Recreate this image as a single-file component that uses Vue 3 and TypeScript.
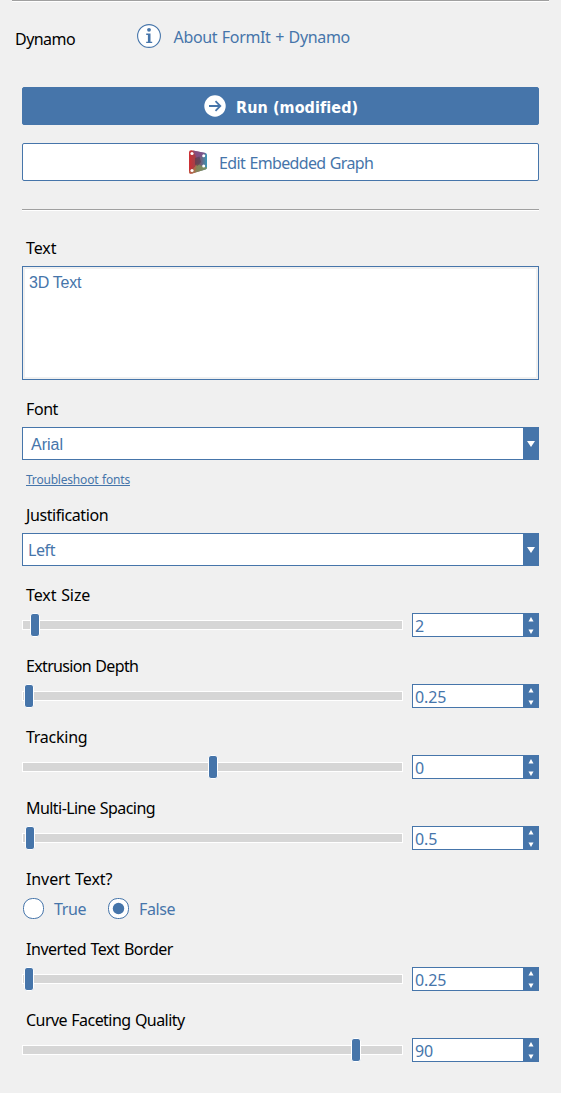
<script setup lang="ts">
import { ref } from 'vue'

interface SliderField {
  label: string
  value: string
  handle: number
  tracking: number
}

const sizing = ref<SliderField[]>([
  { label: 'Text Size', value: '2', handle: 8, tracking: -0.1 },
  { label: 'Extrusion Depth', value: '0.25', handle: 2, tracking: -0.66 },
  { label: 'Tracking', value: '0', handle: 186, tracking: -0.26 },
  { label: 'Multi-Line Spacing', value: '0.5', handle: 3, tracking: -0.56 },
])

const finishing = ref<SliderField[]>([
  { label: 'Inverted Text Border', value: '0.25', handle: 2, tracking: -0.46 },
  { label: 'Curve Faceting Quality', value: '90', handle: 329, tracking: -0.56 },
])

const invert = ref('False')
const content = ref('3D Text')
</script>

<template>
  <main class="panel">
    <hr class="rule top-rule" />
    <header class="header">
      <span class="title">Dynamo</span>
      <svg class="info" width="26" height="26" viewBox="0 0 26 26">
        <circle cx="13" cy="13" r="11.4" fill="#fff" stroke="#4675aa" stroke-width="1.1" />
        <circle cx="13" cy="6.8" r="1.9" fill="#4675aa" />
        <path d="M10.200 10.500h4.300v8.200h1.700v1.400h-6v-1.400h1.700v-6.800h-1.700z" fill="#4675aa" />
      </svg>
      <a class="about">About FormIt + Dynamo</a>
    </header>

    <div class="body">
      <button class="btn run">
        <svg width="22" height="22" viewBox="0 0 22 22">
          <circle cx="11" cy="11" r="10.7" fill="#fff" />
          <path d="M5 11h11M11.5 6.2l4.8 4.8-4.8 4.8" fill="none" stroke="#4675aa" stroke-width="1.8" />
        </svg>
        <span>Run (modified)</span>
      </button>
      <button class="btn edit">
        <svg width="20" height="26" viewBox="0 0 20 26">
          <defs>
            <linearGradient id="base" x1="0" y1="0" x2="1" y2="0">
              <stop offset="0" stop-color="#cf2f33" />
              <stop offset=".35" stop-color="#a3414a" />
              <stop offset=".7" stop-color="#6b6682" />
              <stop offset="1" stop-color="#3a97b8" />
            </linearGradient>
          </defs>
          <path d="M1 3.500Q1 1 3.500 1.200L17.500 4Q19 4.300 19 6v12.500q0 1.500-1.500 2L4 24.600Q1 25.300 1 23z" fill="url(#base)" />
          <path d="M5 1.500l12.500 2.600-2 2.600L9 10z" fill="#80508a" opacity=".8" />
          <path d="M4 21.500L9 15l6.700 2.500 3.300 1q0 1.500-1.500 2L4 24.600z" fill="#80905a" opacity=".85" />
          <path d="M1 22l3-.5L9 15l-2 8.700-3 .9q-3 .7-3-1.600z" fill="#b46848" opacity=".75" />
          <path d="M7 9l4.500-1.500L13 13l-3.500 4L7 15.500z" fill="#4c3e50" opacity=".6" />
          <g fill="#fff"><circle cx="4" cy="4.500" r="1.600" /><circle cx="15.700" cy="6.700" r="1.500" /><circle cx="4" cy="21.500" r="1.600" /><circle cx="15.700" cy="17" r="1.500" /></g>
        </svg>
        <span>Edit Embedded Graph</span>
      </button>
      <hr class="rule" />

      <section class="field first">
        <label class="label l-text">Text</label>
        <textarea v-model="content" class="area" spellcheck="false"></textarea>
      </section>

      <section class="field">
        <label class="label l-just">Font</label>
        <div class="select arial"><span>Arial</span><i class="drop"><svg width="8" height="6"><path d="M0 0h8L4 6z" fill="#fff" /></svg></i></div>
        <a class="trouble">Troubleshoot fonts</a>
      </section>

      <section class="field after-link">
        <label class="label l-just">Justification</label>
        <div class="select"><span>Left</span><i class="drop"><svg width="8" height="6"><path d="M0 0h8L4 6z" fill="#fff" /></svg></i></div>
      </section>

      <section v-for="f in sizing" :key="f.label" class="field">
        <label class="label" :style="{ letterSpacing: f.tracking + 'px' }">{{ f.label }}</label>
        <div class="row">
          <div class="slider"><div class="track"></div><div class="handle" :style="{ left: f.handle + 'px' }"></div></div>
          <div class="spin">
            <span>{{ f.value }}</span>
            <i class="steps">
              <svg width="6" height="5"><path d="M.5 4.500h5L3 0z" fill="#fff" /></svg>
              <svg width="6" height="5"><path d="M.5.5h5L3 5z" fill="#fff" /></svg>
            </i>
          </div>
        </div>
      </section>

      <section class="field">
        <label class="label l-text">Invert Text?</label>
        <div class="radios">
          <div v-for="o in ['True', 'False']" :key="o" class="radio" @click="invert = o">
            <svg width="23" height="23" viewBox="0 0 23 23">
              <rect x="1.500" y="1.500" width="20" height="20" rx="9" fill="#fff" stroke="#4675aa" />
              <circle v-if="invert === o" cx="11.500" cy="11.500" r="5.700" fill="#4675aa" />
            </svg>
            <span>{{ o }}</span>
          </div>
        </div>
      </section>

      <section v-for="f in finishing" :key="f.label" class="field">
        <label class="label" :style="{ letterSpacing: f.tracking + 'px' }">{{ f.label }}</label>
        <div class="row">
          <div class="slider"><div class="track"></div><div class="handle" :style="{ left: f.handle + 'px' }"></div></div>
          <div class="spin">
            <span>{{ f.value }}</span>
            <i class="steps">
              <svg width="6" height="5"><path d="M.5 4.500h5L3 0z" fill="#fff" /></svg>
              <svg width="6" height="5"><path d="M.5.5h5L3 5z" fill="#fff" /></svg>
            </i>
          </div>
        </div>
      </section>
    </div>
  </main>
</template>

<style>
body { background: #f0f0f0; }
</style>

<style scoped>
* { box-sizing: border-box; }
.panel {
  height: 1093px;
  overflow: hidden;
  background: #f0f0f0;
  color: #000;
  font: 16px/20px "Noto Sans", sans-serif;
  letter-spacing: -0.4px;
  word-spacing: 0.8px;
  white-space: nowrap;
}
.rule { height: 2px; margin: 0; border: 0; background: #fff; border-top: 1px solid #a0a0a0; }
.top-rule { margin: 0 12px; }
.header { display: flex; height: 85px; padding: 21px 0 0 15px; align-items: flex-start; }
.title { width: 121px; margin-top: 6px; letter-spacing: -0.55px; }
.about { margin: 4px 0 0 11.5px; color: #4675aa; letter-spacing: -0.34px; }
.body { padding: 0 22px; }
.btn {
  display: flex;
  width: 517px;
  height: 38px;
  padding: 0;
  align-items: center;
  border: 1px solid #4675aa;
  border-radius: 2px;
  font: inherit;
  color: #4675aa;
  background: #fff;
}
.run { padding-left: 181px; gap: 10px; background: #4675aa; color: #fff; font: bold 16px/20px "DejaVu Sans Condensed", "DejaVu Sans", sans-serif; font-stretch: condensed; letter-spacing: 0.08px; }
.run span { margin-top: 3px; }
.edit { margin: 18px 0 28px; padding-left: 165px; gap: 11px; letter-spacing: -0.64px; word-spacing: 0.8px; }
.edit span { margin-top: 2px; }
.field { margin-top: 19px; }
.first { margin-top: 27px; }
.after-link { margin-top: 16px; }
.label { display: block; height: 20px; margin: 0 0 8px 4px; }
.l-text { letter-spacing: -0.1px; }
.l-just { letter-spacing: -0.42px; }
.area {
  display: block;
  width: 517px;
  height: 114px;
  padding: 4px 6px;
  border: 1px solid #4675aa;
  border-radius: 0;
  outline: 0;
  resize: none;
  color: #4675aa;
  background: #fff;
  box-shadow: inset 0 0 0 2px #f0f0f0;
  font: 16px/23px "Liberation Sans", Arial, sans-serif;
  letter-spacing: -0.25px;
}
.select {
  display: flex;
  height: 33px;
  justify-content: space-between;
  align-items: center;
  padding-left: 5px;
  border: 1px solid #4675aa;
  background: #fff;
  color: #4675aa;
}
.arial { padding-left: 8px; font-family: "Liberation Sans", Arial, sans-serif; letter-spacing: 0; }
.arial span { margin-top: 2px; }
.drop { display: flex; width: 15px; height: 31px; align-items: center; justify-content: center; background: #4675aa; }
.trouble { display: block; width: max-content; height: 18px; margin: 11px 0 0 4px; color: #4675aa; font-size: 12px; line-height: 18px; letter-spacing: -0.2px; text-decoration: underline; }
.row { display: flex; justify-content: space-between; height: 24px; }
.slider { position: relative; width: 381px; padding-top: 7px; }
.track { height: 10px; border: 1px solid #fff; background: #d6d6d6; }
.handle { position: absolute; top: 0; width: 10px; height: 24px; border: 1px solid #fff; border-radius: 3px; background: #4675aa; }
.spin { display: flex; width: 127px; justify-content: space-between; padding-left: 2px; border: 1px solid #4675aa; background: #fff; color: #4675aa; line-height: 24px; letter-spacing: -0.1px; }
.steps { display: flex; flex-direction: column; width: 15px; padding-left: 1px; align-items: center; justify-content: center; gap: 7px; background: #4675aa; }
svg { display: block; flex: none; }
.radios { display: flex; height: 23px; color: #4675aa; }
.radio { display: flex; width: 85px; align-items: center; gap: 9px; }
</style>
